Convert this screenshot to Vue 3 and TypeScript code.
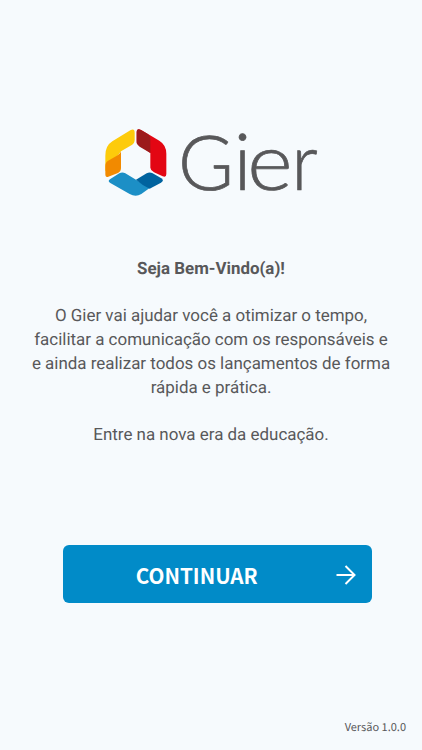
<script setup lang="ts">
const intro: string[] = [
  'O Gier vai ajudar você a otimizar o tempo,',
  'facilitar a comunicação com os responsáveis e',
  'e ainda realizar todos os lançamentos de forma',
  'rápida e prática.',
]
const version = '1.0.0'
</script>

<template>
  <main class="welcome">
    <header class="brand">
      <svg class="mark" viewBox="30 24 186 207" aria-hidden="true">
        <path fill="#fdcb0b" d="M31 107 Q31 77 52 64 L106 31 Q119 24 119 38 V60 Q119 70 109 76 L78 94 L31 154 Z" />
        <path fill="#f28a00" d="M78 94 V144 Q78 154 69 159 L40 170 Q31 174 31 162 V137 Q31 127 42 121 L63 109 Q76 101 78 94 Z" />
        <path fill="#e30613" d="M125 37 Q125 22 140 31 L193 62 Q214 75 214 101 V162 Q214 174 203 169 L177 157 Q167 152 166 143 V99 L125 70 Z" />
        <path fill="#9c1a1b" d="M125 36 Q125 23 139 31 L157 41 Q166 46 166 57 V99 L134 80 Q125 75 125 64 Z" />
        <path fill="#1c8fc6" d="M46 189 Q36 183 46 177 L73 160 Q82 155 91 160 L123 179 L164 204 L139 222 Q122 232 104 222 Z" />
        <path fill="#00639f" d="M123 179 L155 160 Q164 155 173 160 L199 175 Q209 182 198 188 L164 206 Q142 196 123 179 Z" />
      </svg>
      <svg class="wordmark" viewBox="0 0 144 84" role="img" aria-label="Gier">
        <text y="61.7" x="4 59.7">G<tspan class="low">i</tspan></text>
        <text class="low" transform="translate(73.3 61.7) scale(1.1 1)">e</text>
        <text class="low" transform="translate(117.5 61.7) scale(.94 1)">r</text>
      </svg>
    </header>

    <section class="copy">
      <h1>Seja Bem-Vindo(a)!</h1>
      <p><span v-for="line in intro" :key="line" class="line">{{ line }}</span></p>
      <p>Entre na nova era da educação.</p>
    </section>

    <button class="next" type="button">
      <span class="label">CONTINUAR</span>
      <svg class="arrow" viewBox="0 0 20 20" aria-hidden="true">
        <path d="M.5 10H18M9.5 1L18.5 10L9.5 19" />
      </svg>
    </button>

    <footer class="version">Versão {{ version }}</footer>
  </main>
</template>

<style>
body {
  margin: 0;
  background: #f6fafd;
}
</style>

<style scoped>
.welcome {
  box-sizing: border-box;
  display: flex;
  flex-direction: column;
  align-items: center;
  width: 100%;
  height: 750px;
  padding-top: 128px;
  color: #58585a;
  background: #f6fafd;
  font-family: Roboto, sans-serif;
  text-rendering: geometricPrecision;
  overflow: hidden;
}
.brand {
  display: flex;
  gap: 8px;
  width: 214px;
  height: 84px;
  flex: none;
}
.mark {
  flex: none;
  width: 62px;
  height: 69px;
  margin-left: 1px;
}
.wordmark {
  flex: none;
  width: 144px;
  height: 84px;
  margin-left: -1px;
  overflow: visible;
}
.wordmark text {
  font-family: Lato, sans-serif;
  font-size: 76px;
  font-weight: 300;
  fill: #58585a;
  stroke: #58585a;
  stroke-width: 0.7px;
}
.wordmark .low {
  font-size: 79px;
}
.copy {
  margin-top: 45.8px;
  font-size: 16.95px;
  line-height: 23.8px;
  text-align: center;
  white-space: nowrap;
}
h1 {
  margin: 0;
  font-size: 16.9px;
  font-weight: 700;
  line-height: 23.8px;
}
p {
  margin: 23.8px 0 0;
}
.line {
  display: block;
}
.next {
  box-sizing: border-box;
  display: flex;
  flex: none;
  align-items: center;
  width: 309.6px;
  height: 58px;
  margin: 97px 0 0 13px;
  padding: 1px 16.5px 0 73px;
  border: 0;
  border-radius: 6px;
  color: #fff;
  background: #018bc8;
}
.label {
  flex: 1;
  font-family: "Noto Sans CJK JP", sans-serif;
  font-size: 20.7px;
  font-weight: 700;
  line-height: 32px;
  text-align: left;
}
.arrow {
  width: 20px;
  height: 20px;
}
.arrow path {
  fill: none;
  stroke: #fff;
  stroke-width: 2;
}
.version {
  align-self: flex-end;
  margin: auto 16px 14px 0;
  font-family: "Noto Sans CJK JP", sans-serif;
  font-size: 11px;
  line-height: 18px;
}
</style>
